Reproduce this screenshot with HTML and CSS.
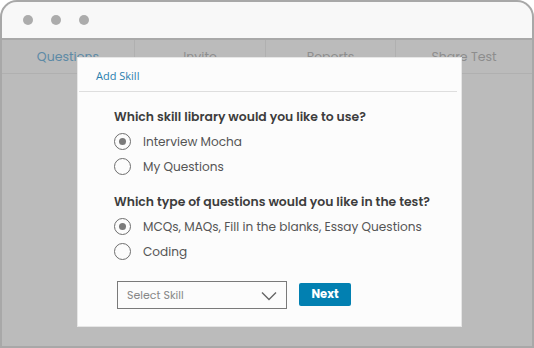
FILE: index.html
```html
<!DOCTYPE html>
<html>
<head>
<meta charset="utf-8">
<link rel="stylesheet" href="styles.css">
</head>
<body>
<div class="window">
  <div class="titlebar">
    <span class="dot"></span><span class="dot"></span><span class="dot"></span>
  </div>
  <div class="content">
    <div class="tabs">
      <div class="tab active">Questions</div>
      <div class="tab">Invite</div>
      <div class="tab">Reports</div>
      <div class="tab">Share Test</div>
    </div>
    <div class="modal">
      <div class="modal-head">Add Skill</div>
      <div class="modal-body">
        <div class="question">Which skill library would you like to use?</div>
        <div class="option"><span class="radio checked"></span>Interview Mocha</div>
        <div class="option"><span class="radio"></span>My Questions</div>
        <div class="question q2">Which type of questions would you like in the test?</div>
        <div class="option"><span class="radio checked"></span>MCQs, MAQs, Fill in the blanks, Essay Questions</div>
        <div class="option"><span class="radio"></span>Coding</div>
        <div class="actions">
          <div class="select">Select Skill
            <svg class="chev" width="16" height="10" viewBox="0 0 16 10"><path d="M1 1.5 L8 8.5 L15 1.5" fill="none" stroke="#666" stroke-width="1.4"/></svg>
          </div>
          <button class="btn">Next</button>
        </div>
      </div>
    </div>
  </div>
</div>
</body>
</html>
```
FILE: styles.css
```css
* { box-sizing: border-box; }
html, body { margin: 0; padding: 0; background: #fff; }
body { font-family: "Poppins", "Open Sans", sans-serif; }
.window {
  width: 534px;
  height: 348px;
  border: 2px solid #a8a8a8;
  border-radius: 17px 17px 0 0;
  overflow: hidden;
  display: flex;
  flex-direction: column;
  background: #bbbbbb;
}
.titlebar {
  height: 38px;
  flex: none;
  background: #f8f8f8;
  border-bottom: 2px solid #a9a9a9;
  display: flex;
  align-items: center;
  gap: 18px;
  padding: 0 0 0 21px;
}
.dot {
  width: 10px; height: 10px; border-radius: 50%;
  background: #acacac;
}
.content {
  flex: 1;
  position: relative;
  background: #bbbbbb;
}
.tabs {
  display: grid;
  grid-template-columns: 132px 131px 130px 1fr;
  height: 34px;
  border-bottom: 1px solid #b0b0b0;
}
.tab {
  display: flex;
  justify-content: center;
  align-items: center;
  font-size: 12.5px;
  color: #8d8d8d;
  border-left: 1px solid #b0b0b0;
}
.tab:first-child { border-left: none; }
.tab.active { color: #5d8aa6; }
.modal {
  position: absolute;
  left: 75px;
  top: 17px;
  width: 385px;
  height: 270px;
  background: #fcfcfc;
  border: 1px solid #e6e6e6;
  padding: 0 4px 0 1px;
}
.modal-head {
  height: 34px;
  border-bottom: 1px solid #dedede;
  padding: 10px 0 0 17px;
  font-family: "Open Sans", sans-serif;
  font-size: 11px;
  color: #2a7fae;
}
.modal-body {
  padding: 15px 0 0 35px;
}
.question {
  font-size: 12.4px;
  font-weight: 600;
  color: #3d3d3d;
  height: 20px;
  line-height: 20px;
  margin-bottom: 2px;
}
.q2 { margin-top: 13px; }
.option {
  display: flex;
  align-items: center;
  height: 25px;
  font-size: 12.1px;
  color: #555;
}
.option:last-of-type { height: 24px; }
.radio {
  width: 17px; height: 17px;
  border: 1px solid #6e6e6e;
  border-radius: 50%;
  margin-right: 12px;
  display: flex;
  align-items: center;
  justify-content: center;
}
.radio.checked::after {
  content: "";
  width: 7px; height: 7px;
  border-radius: 50%;
  background: #7a7a7a;
}
.actions {
  display: flex;
  align-items: center;
  gap: 12px;
  margin-top: 17px;
  margin-left: 3px;
}
.select {
  width: 170px;
  height: 28px;
  border: 1px solid #7a7a7a;
  display: flex;
  align-items: center;
  justify-content: space-between;
  padding: 0 9px 0 9px;
  font-size: 11px;
  color: #888;
  background: #fcfcfc;
}
.chev { margin-top: 1px; }
.btn {
  width: 52px;
  height: 23px;
  background: #0280b1;
  color: #fff;
  border: none;
  border-radius: 2px;
  font-family: "Poppins", "Open Sans", sans-serif;
  font-weight: 700;
  font-size: 11.5px;
  padding: 0;
  margin-top: -2px;
}
```
